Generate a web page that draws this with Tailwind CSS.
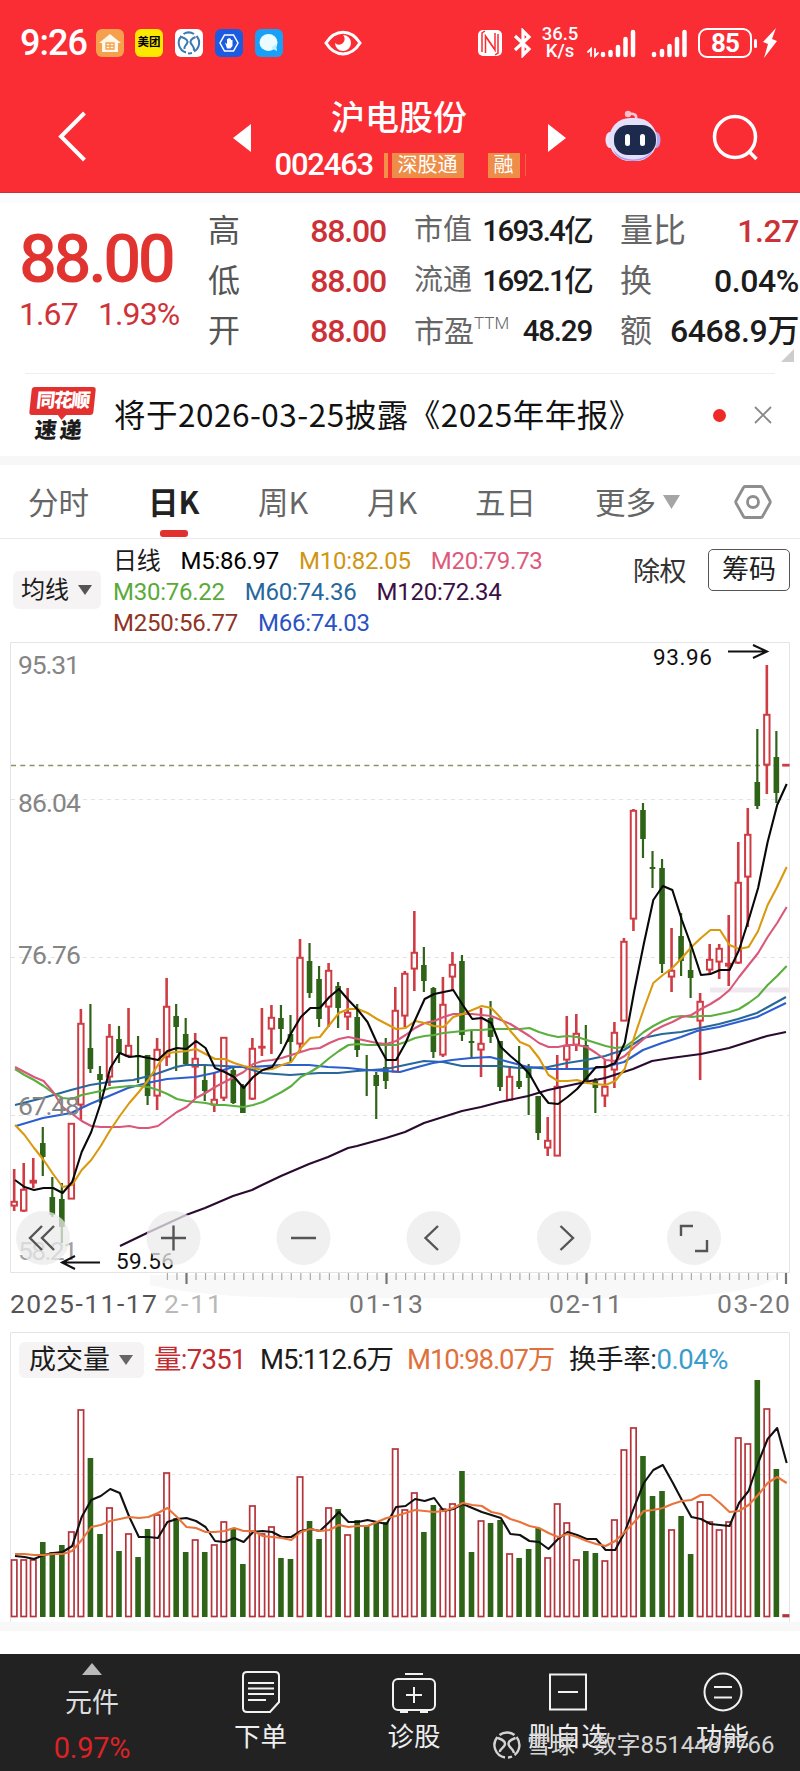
<!DOCTYPE html>
<html lang="zh-CN">
<head>
  <meta charset="UTF-8" />
  <meta name="viewport" content="width=device-width, initial-scale=1" />
  <title>沪电股份 002463</title>
  <script src="https://cdn.jsdelivr.net/npm/@tailwindcss/browser@4"></script>
</head>
<body class="bg-white text-[#1c1c1c] font-[Roboto,'Noto_Sans_CJK_SC',sans-serif]">
  <main class="w-[800px] h-[1771px] flex flex-col overflow-hidden">

    <!-- Header -->
    <header class="h-[193px] shrink-0 bg-[#fa2c34] border-b border-[#c8323a] text-white flex flex-col">
      <!-- Status bar -->
      <div class="h-[86px] flex items-center pl-[20px]">
        <span class="text-[36px] font-medium tracking-[-1px] w-[76px]">9:26</span>
        <svg class="w-[28px] h-[28px]" viewBox="0 0 28 28">
          <rect width="28" height="28" rx="6" fill="#f5a04c" />
          <path d="M3 14 14 5l11 9h-3v9H6v-9z" fill="#fff8e8" />
          <path d="M10 14h8v6h-8zM14 14v6M10 17h8" fill="none" stroke="#f5a04c" stroke-width="1.3" />
        </svg>
        <span class="ml-[11px] w-[28px] h-[28px] rounded-md bg-[#fde800] text-black text-[11.5px] font-bold flex items-center justify-center whitespace-nowrap">美团</span>
        <svg class="ml-[12px] w-[28px] h-[28px]" viewBox="0 0 28 28" fill="none" stroke="#3c78b4" stroke-width="2">
          <rect width="28" height="28" rx="6" fill="#fff" stroke="none" />
          <path d="M11 23.500A10 10 0 0 1 6.500 7M8.500 5a10 10 0 0 1 10.500 0M21.500 7A10 10 0 0 1 19 22.500M17 24a10 10 0 0 1-4 .3M6.500 8c5 1.500 7 4 5.500 6.500S9 17 9.500 20M20.500 8c-4 1.500-6 4-4.500 6.500s3.500 3 3 7" />
        </svg>
        <svg class="ml-[12px] w-[28px] h-[28px]" viewBox="0 0 28 28">
          <rect width="28" height="28" rx="6" fill="#1a5be0" />
          <path d="M9.500 6h9l4.500 8-4.500 8h-9L5 14z" fill="none" stroke="#fff" stroke-width="1.500" />
          <path d="M10 13.500l2 1.500v-5h1.300V9h1.400v.7H16V11h1.500v6l-2 2.500h-3.500z" fill="#fff" />
        </svg>
        <svg class="ml-[12px] w-[28px] h-[28px]" viewBox="0 0 28 28">
          <rect width="28" height="28" rx="6" fill="#18a0f8" />
          <ellipse cx="13.500" cy="13.500" rx="9" ry="8.500" fill="#eafcff" />
          <path d="M16 19l6 3-1-7z" fill="#bff0ff" />
        </svg>
        <svg class="ml-[41px] w-[38px] h-[26px]" viewBox="0 0 38 26">
          <path d="M2 13c9-14.500 25-14.500 34 0-9 14.500-25 14.500-34 0z" fill="none" stroke="#fff" stroke-width="3" />
          <path d="M19 5a8 8 0 1 1-8 8 5.500 5.500 0 0 0 8-8z" fill="#fff" />
        </svg>
        <svg class="ml-[115px] w-[26px] h-[28px]" viewBox="0 0 26 28">
          <rect x="1" y="1" width="24" height="26" rx="5" fill="#fff" />
          <path d="M8.500 24V7l9 13M9 8l9 13V4M5 23V4l3-2M21 5v19l-3 2" fill="none" stroke="#fa2c34" stroke-width="1.500" />
        </svg>
        <svg class="ml-[10px] w-[20px] h-[30px]" viewBox="0 0 20 30" fill="none" stroke="#fff" stroke-width="3.200">
          <path d="M2 8l14 13-6 6V3l6 6L2 22" />
        </svg>
        <div class="ml-[8px] w-[38px] text-[18.500px] leading-[17px] font-medium text-center flex flex-col"><span>36.5</span><span>K/s</span></div>
        <svg class="ml-[7px] w-[50px] h-[30px]" viewBox="0 0 50 30" fill="none" stroke="#fff" stroke-width="4.500" stroke-linecap="round">
          <path d="M17 26v1M24.500 24v3M32 19v8M39.500 11v16M47 4v23" />
          <path d="M5 28v-7l-3 3M9 21v7l3-3" stroke-width="1.800" />
        </svg>
        <svg class="ml-[15px] w-[37px] h-[30px]" viewBox="0 0 37 30" fill="none" stroke="#fff" stroke-width="4.500" stroke-linecap="round">
          <path d="M3 26v1M11 23v4M18.500 18v9M26 11v16M33.500 4v23" />
        </svg>
        <div class="ml-[10px] w-[54px] h-[30px] rounded-[9px] border-2 border-white text-[26px] font-bold tracking-[-1px] flex items-center justify-center">85</div>
        <div class="ml-[2px] w-[3px] h-[9px] rounded bg-white"></div>
        <svg class="ml-[6px] w-[15px] h-[30px]" viewBox="0 0 15 30"><path d="M13 0 0 14l5 2-4 14 13-17-5-2z" fill="#fff" /></svg>
      </div>

      <!-- Title bar -->
      <div class="h-[106px] flex">
        <svg class="ml-[57px] mt-[24px] w-[30px] h-[52px]" viewBox="0 0 30 52" fill="none" stroke="#fff" stroke-width="4"><path d="M27.500 3 4 26.500 27.500 50" /></svg>
        <svg class="ml-[146px] mt-[38px] w-[18px] h-[28px]" viewBox="0 0 18 28"><path d="M18 0v28L0 14z" fill="#fff" /></svg>
        <div class="w-[296px] flex flex-col items-center">
          <h1 class="mt-[10px] h-[44px] leading-[44px] text-[34px] font-medium">沪电股份</h1>
          <div class="h-[50px] ml-[2px] flex items-center">
            <span class="w-[109px] text-[31px] font-medium tracking-[-1.200px]">002463</span>
            <span class="w-[4px] h-[25px] bg-[#f49048] mr-[4px]"></span>
            <span class="w-[72px] h-[25px] bg-[#ee8d48] text-[20px] leading-[24px] text-center">深股通</span>
            <span class="ml-[24px] w-[32px] h-[25px] bg-[#ee8d48] text-[20px] leading-[24px] text-center">融</span>
            <span class="ml-[5px] w-px h-[22px] bg-[#f06840]"></span>
          </div>
        </div>
        <svg class="ml-[1px] mt-[38px] w-[18px] h-[28px]" viewBox="0 0 18 28"><path d="M0 0v28l18-14z" fill="#fff" /></svg>
        <svg class="ml-[38px] mt-[23px] w-[58px] h-[54px]" viewBox="0 0 58 54">
          <path d="M32 10c1-4-2-6-7-5" fill="none" stroke="#ffc8dc" stroke-width="2.500" />
          <circle cx="24" cy="5" r="3.200" fill="#ffc0cc" />
          <ellipse cx="6" cy="31" rx="4.500" ry="8" fill="#e8e6fa" />
          <ellipse cx="52" cy="31" rx="4.500" ry="8" fill="#b4a8f0" />
          <rect x="5" y="9" width="48" height="43" rx="21" fill="#e4e0fb" />
          <path d="M9 40c8 14 32 14 40 0-4 16-36 16-40 0z" fill="#a99cf4" />
          <rect x="10" y="16" width="42" height="30" rx="14" fill="#1d2a4e" />
          <rect x="21" y="25" width="5" height="12" rx="2.500" fill="#fff" />
          <rect x="36" y="25" width="5" height="12" rx="2.500" fill="#fff" />
        </svg>
        <svg class="ml-[50px] mt-[28px] w-[48px] h-[48px]" viewBox="0 0 48 48" fill="none" stroke="#fff" stroke-width="3.500"><circle cx="23" cy="23" r="20.500" /><path d="M36.500 37l8 8" /></svg>
      </div>
    </header>

    <!-- Quote -->
    <section class="h-[180px] shrink-0 flex relative border-t-[10px] border-[#fcfcfe]">
      <div class="w-[208px] pl-[19px] text-[#e1332f]">
        <div class="mt-[22px] h-[68px] leading-[68px] text-[67px] font-medium tracking-[-3.500px]">88.00</div>
        <div class="mt-[2px] flex text-[32px] tracking-[-0.900px] leading-[38px] text-[#cf3238]"><span class="w-[79px]">1.67</span><span>1.93%</span></div>
      </div>
      <div class="w-[178px] pt-[3px] grid grid-rows-[50px_50px_50px] text-[32px] text-[#cb3238] font-medium tracking-[-1.200px]">
        <div class="flex items-center justify-between"><span class="text-[32px] text-[#555] font-normal">高</span><span>88.00</span></div>
        <div class="flex items-center justify-between"><span class="text-[32px] text-[#555] font-normal">低</span><span>88.00</span></div>
        <div class="flex items-center justify-between"><span class="text-[32px] text-[#555] font-normal">开</span><span>88.00</span></div>
      </div>
      <div class="ml-[28px] w-[178px] pt-[3px] grid grid-rows-[50px_50px_50px] text-[29.500px] font-medium tracking-[-1.700px]">
        <div class="flex items-center justify-between"><span class="text-[29px] text-[#666] font-normal tracking-normal">市值</span><span>1693.4亿</span></div>
        <div class="flex items-center justify-between"><span class="text-[29px] text-[#666] font-normal tracking-normal">流通</span><span>1692.1亿</span></div>
        <div class="flex items-center justify-between"><span class="text-[30px] text-[#666] font-normal tracking-normal flex">市盈<span class="text-[17px] -mt-[5px] leading-[38px] font-light">TTM</span></span><span class="tracking-[-1.200px]">48.29</span></div>
      </div>
      <div class="ml-[28px] w-[179px] pt-[3px] grid grid-rows-[50px_50px_50px] text-[32px] font-medium tracking-[-0.400px]">
        <div class="flex items-center justify-between"><span class="text-[33px] text-[#666] font-normal tracking-normal">量比</span><span class="text-[#cb3238]">1.27</span></div>
        <div class="flex items-center justify-between"><span class="text-[32px] text-[#666] font-normal">换</span><span>0.04%</span></div>
        <div class="flex items-center justify-between"><span class="text-[32px] text-[#666] font-normal">额</span><span>6468.9万</span></div>
      </div>
      <svg class="absolute left-[781px] top-[146px] w-[13px] h-[13px]" viewBox="0 0 13 13"><path d="M13 0v13H0z" fill="#cdcdcd" /></svg>
    </section>

    <!-- News line -->
    <section class="h-[83px] shrink-0 mx-[25px] border-t border-[#eee] flex items-center">
      <div class="ml-[3px] w-[66px] flex flex-col items-center text-[19px] font-black -skew-x-6">
        <div class="relative w-[64px] h-[28px] rounded-[3px] bg-[#e2312f] text-white leading-[27px] text-center tracking-[-1.500px]">同花顺
          <svg class="absolute left-[28px] top-[27px] w-[10px] h-[6px]" viewBox="0 0 10 6"><path d="M0 0h10L5 6z" fill="#e2312f" /></svg>
        </div>
        <div class="mt-[3px] h-[26px] leading-[26px] text-[22px] tracking-[3px] mr-[-1px]">速递</div>
      </div>
      <p class="ml-[20px] -mt-[2px] w-[599px] text-[31.500px] tracking-[0.500px] whitespace-nowrap font-['Noto_Sans_CJK_SC',sans-serif] text-[#111]">将于2026-03-25披露《2025年年报》</p>
      <span class="w-[13px] h-[13px] rounded-full bg-[#ee2a28]"></span>
      <svg class="ml-[28px] w-[18px] h-[18px]" viewBox="0 0 18 18" stroke="#888" stroke-width="1.800"><path d="M1 1l16 16M17 1 1 17" /></svg>
    </section>

    <!-- Period tabs -->
    <nav class="h-[83px] shrink-0 border-t-[9px] border-t-[#f7f7f8] border-b border-b-[#ececee] flex items-center text-[30.500px] text-[#666] font-['Noto_Sans_CJK_SC',sans-serif]">
      <a class="ml-[28px] w-[120px]">分时</a>
      <a class="relative w-[110px] font-bold text-[#222]">日K<span class="absolute left-[12px] -bottom-[13px] w-[28px] h-[7px] rounded-[3px] bg-[#e1302e]"></span></a>
      <a class="w-[109px]">周K</a>
      <a class="w-[108px]">月K</a>
      <a class="w-[120px]">五日</a>
      <a class="w-[139px] flex items-center">更多<svg class="ml-[7px] w-[17px] h-[14px]" viewBox="0 0 17 14"><path d="M0 0h17L8.500 14z" fill="#a5a5a5" /></svg></a>
      <svg class="w-[38px] h-[36px]" viewBox="0 0 38 36" fill="none" stroke="#8e8e8e" stroke-width="2.800"><path d="M11 2.500h16q1 0 1.500 1L36 17q.5 1 0 2l-7.500 13.500q-.5 1-1.500 1H11q-1 0-1.500-1L2 19q-.5-1 0-2L9.500 3.500q.5-1 1.500-1z" /><circle cx="19" cy="18" r="5.500" /></svg>
    </nav>

    <!-- Moving averages -->
    <section class="h-[103px] shrink-0 flex pl-[13px]">
      <div class="mt-[32px] w-[88px] h-[38px] rounded-md bg-[#f6f3f5] pl-[8px] flex items-center text-[24px]">均线<svg class="ml-[9px] w-[14px] h-[10px]" viewBox="0 0 14 10"><path d="M0 0h14L7 10z" fill="#555" /></svg></div>
      <div class="ml-[12px] mt-[7px] w-[520px] text-[24px] leading-[31px] tracking-[-0.250px]">
        <div class="flex gap-[20px]"><span>日线</span><span class="text-black">M5:86.97</span><span class="text-[#cf9612]">M10:82.05</span><span class="text-[#dd5a7c]">M20:79.73</span></div>
        <div class="flex gap-[20px]"><span class="text-[#5aaa3a]">M30:76.22</span><span class="text-[#27679c]">M60:74.36</span><span class="text-[#3b0f45]">M120:72.34</span></div>
        <div class="flex gap-[20px]"><span class="text-[#8e3526]">M250:56.77</span><span class="text-[#2b52c2]">M66:74.03</span></div>
      </div>
      <span class="mt-[13px] w-[75px] text-[27px] tracking-[-0.500px] text-[#333]">除权</span>
      <span class="mt-[10px] w-[82px] h-[42px] leading-[40px] text-center rounded-[5px] border-[1.500px] border-[#555] text-[27px]">筹码</span>
    </section>

    <!-- Daily K chart with its time axis -->
    <svg id="price" class="shrink-0 w-[800px] h-[690px]" viewBox="0 642 800 690">
      <path d="M150 1275H780Q760 1296 640 1298H300Q200 1297 150 1285z" fill="#f9f8f9" />
      <path d="M10.500 642.500h779v630h-779z" fill="none" stroke="#e4e4e6" />
      <path d="M11 799.500H789M11 957.500H789M11 1115.500H789" stroke="#e3e3e3" stroke-dasharray="4 4" />
      <path d="M11 765.500H780" stroke="#8f9064" stroke-width="1.400" stroke-dasharray="5 4.300" />
      <path d="M710 990H790" stroke="#efe8ee" stroke-width="5" />
      <g id="candles"></g>
      <g id="averages" fill="none" stroke-width="2.100" stroke-linejoin="round">
        <polyline stroke="#27679c" points="15,1105 43,1098 71,1090 90,1085 109,1082 133,1080 153,1075 176,1067 186,1065 205,1065 224,1066 243,1067 262,1073 290,1075 319,1073 338,1073 357,1071 386,1069 405,1065 424,1061 443,1062 462,1066 481,1066 500,1066 519,1068 548,1067 567,1063 586,1060 605,1056 614,1053 624,1050 643,1038 662,1034 681,1032 700,1028 719,1024 738,1019 757,1013 786,997" />
        <polyline stroke="#2b5fd0" points="16,1126 43,1118 71,1113 90,1104 109,1096 128,1088 147,1083 167,1079 195,1077 214,1073 233,1067 252,1067 281,1065 309,1065 328,1067 348,1068 367,1070 386,1071 400,1072 414,1068 433,1063 452,1060 471,1058 490,1057 509,1062 528,1067 548,1069 567,1069 586,1069 605,1067 624,1062 643,1050 662,1043 681,1037 697,1031 719,1027 738,1022 757,1017 786,1003" />
        <polyline stroke="#2a0a30" points="120,1246 147,1233 186,1215 205,1208 233,1196 252,1190 260,1186 281,1176 309,1164 328,1157 348,1148 357,1146 386,1138 405,1132 424,1123 443,1117 462,1111 481,1107 500,1102 528,1096 548,1090 576,1084 605,1078 633,1069 652,1061 671,1058 701,1054 729,1048 767,1036 786,1032" />
      </g>
      <g fill="#858585" font-size="26.500">
        <text x="18" y="674" textLength="62">95.31</text>
        <text x="18" y="812" textLength="63">86.04</text>
        <text x="18" y="964" textLength="63">76.76</text>
        <text x="18" y="1115" textLength="62">67.48</text>
        <text x="18" y="1260" textLength="60" fill="#a0a0a0">58.21</text>
      </g>
      <g fill="#111" font-size="22.500">
        <text x="653" y="665" textLength="59">93.96</text>
        <text x="116" y="1269" textLength="58">59.56</text>
      </g>
      <path d="M728 651.500h38M753 645l14 6.500-14 6.500M100 1262.500H63M75 1256l-13 6.500 13 6.500" fill="none" stroke="#111" stroke-width="2" />

      <!-- Chart buttons -->
      <g fill="#ebebeb" fill-opacity=".75">
        <circle cx="43" cy="1238" r="27" /><circle cx="173.500" cy="1238" r="27" /><circle cx="303.500" cy="1238" r="27" /><circle cx="433.500" cy="1238" r="27" /><circle cx="564" cy="1238" r="27" /><circle cx="694" cy="1238" r="27" />
      </g>
      <path d="M42 1226l-12 12 12 12M54 1226l-12 12 12 12M161 1238h25M173.500 1225.500v25M291 1238h25M438 1226l-12.500 12 12.500 12M560.500 1226l12.500 12-12.500 12M681 1236v-10h12M707 1240v11h-12" fill="none" stroke="#555" stroke-width="2.400" />

      <path id="ticks" stroke="#aaa" stroke-width="1.200" />
      <path d="M186.500 1273v11M386.500 1273v11M586.500 1273v11M786 1273v11" stroke="#777" stroke-width="2.200" />
      <g fill="#555" font-size="26.500">
        <text x="10" y="1313" textLength="147">2025-11-17</text>
        <text x="164" y="1313" textLength="58" fill="#b8b8b8">2-11</text>
        <text x="349" y="1313" textLength="74" fill="#777">01-13</text>
        <text x="549" y="1313" textLength="73" fill="#777">02-11</text>
        <text x="717" y="1313" textLength="73" fill="#777">03-20</text>
      </g>
    </svg>

    <!-- Volume -->
    <section class="h-[290px] shrink-0 relative">
      <svg class="absolute left-0 top-0 w-[800px] h-[290px]" viewBox="0 1332 800 290">
        <path d="M10.500 1622V1332.500h779V1622" fill="none" stroke="#e4e4e6" />
        <path d="M11 1474.500H789" stroke="#e3e3e3" stroke-dasharray="3 4" />
        <g id="volumes"></g>
        <g id="volume-averages" fill="none" stroke-width="2.100" stroke-linejoin="round"></g>
      </svg>
      <div class="relative h-[56px] pl-[19px] flex items-center text-[27.500px] tracking-[-1.100px] whitespace-nowrap">
        <div class="w-[125px] h-[36px] rounded-md bg-[#f5f3f4] pl-[10px] flex items-center text-[27px] tracking-normal">成交量<svg class="ml-[9px] w-[14px] h-[10px]" viewBox="0 0 14 10"><path d="M0 0h14L7 10z" fill="#666" /></svg></div>
        <span class="ml-[10px] w-[106px] tracking-[-0.700px] text-[#c02c30]">量:7351</span>
        <span class="w-[147px]">M5:112.6万</span>
        <span class="w-[162px] text-[#e0703c]">M10:98.07万</span>
        <span class="tracking-[-0.400px]">换手率:</span><span class="tracking-[-0.500px] text-[#3a9ccb]">0.04%</span>
      </div>
    </section>

    <div class="h-[9px] shrink-0 bg-[#f9f8f9]"></div>
    <div class="h-[23px] shrink-0"></div>

    <!-- Bottom bar -->
    <footer class="relative h-[117px] shrink-0 bg-[#222] text-[#eee] text-[26.500px] flex">
      <div class="w-[184px] flex flex-col items-center">
        <svg class="mt-[9px] w-[20px] h-[12px]" viewBox="0 0 20 12"><path d="M10 0l10 12H0z" fill="#b9b9b9" /></svg>
        <span class="mt-[9px] h-[38px] leading-[38px] text-[27px] text-[#ddd]">元件</span>
        <span class="mt-[7px] h-[38px] leading-[38px] text-[29px] tracking-[-0.300px] text-[#dc2226]">0.97%</span>
      </div>
      <div class="w-[153px] flex flex-col items-center">
        <svg class="mt-[16px] w-[40px] h-[44px]" viewBox="0 0 40 44" fill="none" stroke="#f2f2f2" stroke-width="2"><path d="M6 2h28q4 0 4 4v26l-9 10H6q-4 0-4-4V6q0-4 4-4zM7 13h26M7 18.500h26M7 24h26M7 30h18" /></svg>
        <span class="mt-[3px] h-[40px] leading-[40px]">下单</span>
      </div>
      <div class="w-[154px] flex flex-col items-center">
        <svg class="mt-[16px] w-[46px] h-[44px]" viewBox="0 0 46 44" fill="none" stroke="#f2f2f2" stroke-width="2"><rect x="2" y="9" width="42" height="31" rx="5" /><path d="M14 4h18M23 17v16M15 25h16M9 42h8M29 42h8" /></svg>
        <span class="mt-[3px] h-[40px] leading-[40px]">诊股</span>
      </div>
      <div class="w-[154px] flex flex-col items-center">
        <svg class="mt-[16px] w-[40px] h-[44px]" viewBox="0 0 40 44" fill="none" stroke="#f2f2f2" stroke-width="2"><path d="M2 4.500h36v35H2zM10 22h20" /></svg>
        <span class="mt-[3px] h-[40px] leading-[40px]">删自选</span>
      </div>
      <div class="w-[155px] flex flex-col items-center">
        <svg class="mt-[16px] w-[40px] h-[44px]" viewBox="0 0 40 44" fill="none" stroke="#f2f2f2" stroke-width="2"><circle cx="20" cy="22" r="18.500" /><path d="M11 17h18M11 27.500h18" /></svg>
        <span class="mt-[3px] h-[40px] leading-[40px]">功能</span>
      </div>
      <!-- Watermark -->
      <div class="absolute left-[493px] top-[73px] h-[36px] flex items-center text-[24px] tracking-[-0.100px] text-[#d4d4d4] whitespace-nowrap">
        <svg class="w-[28px] h-[28px]" viewBox="0 0 28 28" fill="none" stroke="#d4d4d4" stroke-width="2.400"><path d="M12 26.500A12.500 12.500 0 0 1 4.500 6M6.500 4a12.500 12.500 0 0 1 15 0M23.500 6a12.500 12.500 0 0 1-2 18M19 25.500a12.500 12.500 0 0 1-4 1M5 7c6 2 8 4.500 6.500 7.500S6.500 18 7 21M22.500 7c-6 2-8 4.500-6.500 7.500s4.500 3.500 5 7.500" /></svg>
        <span class="ml-[6px]">雪球 · 数字8514487766</span>
      </div>
    </footer>
  </main>

  <script>
    const RED = '#cf3c44', GREEN = '#2f6418';
    const x = i => 14.2 + i * 9.527;
    const $ = id => document.getElementById(id);

    // r = up, g = down; then high, body top, body bottom, low, volume top
    const days = `r 1169 1201 1206 1211 1560|r 1163 1189 1211 1212 1560|r 1158 1180 1183 1188 1560|g 1127 1143 1157 1176 1543|g 1177 1197 1215 1217 1553
g 1183 1199 1227 1243 1546|r 1123 1123 1199 1199 1532|r 1009 1023 1105 1120 1410|g 1004 1048 1069 1073 1459|g 1066 1074 1080 1103 1535
r 1024 1036 1077 1086 1508|g 1026 1039 1053 1063 1552|r 1008 1045 1056 1056 1534|g 1036 1055 1057 1083 1558|g 1055 1055 1096 1105 1530
r 1038 1049 1096 1110 1515|r 978 1006 1057 1066 1473|g 1004 1016 1027 1071 1519|g 1018 1034 1064 1065 1553|r 1033 1058 1067 1098 1540
g 1064 1080 1091 1101 1553|r 1072 1099 1105 1112 1545|r 1037 1037 1098 1101 1522|g 1066 1070 1103 1104 1529|g 1084 1086 1113 1113 1565
r 1038 1048 1099 1100 1506|r 1008 1046 1048 1056 1534|r 1005 1017 1029 1054 1527|g 1005 1018 1029 1044 1559|g 1015 1034 1042 1062 1560
r 939 957 1044 1051 1477|g 943 961 993 998 1522|g 966 979 1019 1027 1540|r 963 970 1007 1027 1508|g 982 986 1008 1028 1510
r 988 1012 1017 1030 1535|g 1004 1017 1050 1057 1521|g 1055 1069 1071 1096 1526|g 1072 1075 1086 1119 1523|g 1038 1067 1081 1089 1523
r 987 1010 1072 1072 1449|r 971 973 1016 1027 1510|r 911 952 969 991 1493|g 947 965 981 992 1533|g 987 988 1052 1058 1506
r 977 1004 1055 1057 1509|r 952 964 977 990 1504|g 955 961 1035 1041 1472|g 1030 1041 1043 1058 1553|r 1008 1043 1050 1077 1521
g 1001 1018 1037 1043 1524|g 1041 1041 1087 1091 1521|r 1067 1076 1100 1101 1554|g 1046 1081 1087 1089 1559|g 1064 1067 1078 1115 1550
g 1096 1096 1133 1140 1529|r 1117 1140 1148 1156 1558|r 1055 1086 1156 1156 1504|r 1016 1045 1060 1070 1523|r 1014 1033 1045 1051 1560
g 1025 1045 1081 1082 1552|g 1078 1081 1088 1113 1554|r 1059 1086 1096 1107 1561|r 1022 1032 1070 1088 1520|r 938 941 1021 1021 1450
r 809 810 919 931 1428|g 803 810 839 858 1457|g 851 867 869 888 1497|g 859 868 964 973 1492|r 928 970 977 992 1530
g 913 936 961 976 1517|g 944 970 978 998 1555|r 993 1001 1021 1080 1502|r 944 959 970 974 1522|r 944 948 962 979 1530
r 915 963 966 986 1522|r 842 882 963 964 1438|r 808 834 877 927 1444|g 729 782 806 809 1381|r 665 714 765 794 1409
g 731 757 793 803 1470|r 765 764 766 765 1615`.split(/[|\n]/).map(d => d.split(' '));

    let candles = '', volumes = '';
    days.forEach(([dir, ...v], i) => {
      const [hi, top, bot, lo, vol] = v.map(Number), c = x(i);
      if (dir === 'g') {
        candles += `<path d="M${c} ${hi}V${lo}" stroke="${GREEN}" stroke-width="2.2"/><rect x="${c - 2.8}" y="${top}" width="5.6" height="${bot - top}" fill="${GREEN}"/>`;
        volumes += `<rect x="${c - 2.8}" y="${vol - 1}" width="5.6" height="${1618 - vol}" fill="${GREEN}"/>`;
      } else {
        candles += `<path d="M${c} ${hi}V${top}M${c} ${bot}V${lo}" stroke="${RED}" stroke-width="2.6"/><rect x="${c - 2.7}" y="${top + .8}" width="5.4" height="${Math.max(bot - top - 1.2, .5)}" fill="none" stroke="${RED}" stroke-width="2"/>`;
        volumes += `<rect x="${c - 2.7}" y="${vol}" width="5.4" height="${1616.5 - vol}" fill="none" stroke="#b5343c" stroke-width="1.7"/>`;
      }
    });
    $('candles').innerHTML = candles;
    $('volumes').innerHTML = volumes;

    const line = (color, ys) => `<polyline stroke="${color}" points="${ys.map((y, i) => x(i) + 0.8 + ',' + y).join(' ')}"/>`;

    $('averages').innerHTML +=
      line('#5aaf3f', [1069,1075,1080,1086,1093,1098,1099,1095,1093,1091,1088,1087,1086,1086,1087,1090,1094,1099,1101,1102,1103,1105,1105,1106,1107,1105,1102,1097,1092,1086,1077,1072,1066,1058,1051,1045,1044,1045,1045,1045,1045,1042,1038,1036,1035,1033,1032,1031,1030,1030,1029,1029,1029,1029,1028,1032,1035,1037,1036,1037,1040,1043,1046,1048,1047,1040,1032,1026,1021,1017,1016,1017,1016,1016,1014,1012,1009,1003,996,985,976,966]) +
      line('#d9587a', [1067,1072,1077,1081,1092,1107,1114,1121,1126,1127,1127,1127,1126,1128,1128,1126,1119,1112,1107,1098,1093,1087,1082,1077,1072,1064,1061,1060,1058,1055,1052,1049,1048,1043,1039,1037,1039,1041,1043,1044,1041,1035,1028,1023,1021,1017,1014,1014,1014,1015,1016,1020,1024,1030,1036,1043,1047,1047,1045,1045,1047,1053,1060,1061,1056,1047,1039,1031,1026,1022,1017,1015,1009,1004,998,990,977,965,953,937,923,907]) +
      line('#d99a10', [1125,1135,1148,1160,1174,1187,1185,1170,1160,1146,1130,1116,1103,1092,1080,1065,1053,1052,1051,1049,1054,1059,1059,1063,1066,1068,1070,1069,1065,1062,1048,1038,1037,1025,1013,1009,1009,1013,1019,1024,1029,1028,1021,1023,1026,1027,1017,1014,1010,1006,1008,1018,1031,1042,1046,1058,1075,1081,1081,1080,1083,1084,1085,1081,1069,1037,1009,983,975,968,958,947,938,930,930,945,949,947,931,905,887,867]) +
      line('#080808', [1180,1187,1190,1188,1188,1193,1182,1152,1132,1103,1068,1053,1057,1056,1058,1060,1051,1048,1049,1041,1048,1068,1072,1077,1088,1077,1070,1067,1052,1033,1017,1008,1008,997,989,1000,1010,1022,1043,1060,1060,1043,1020,999,994,992,990,1005,1019,1018,1023,1047,1056,1064,1074,1091,1103,1104,1097,1089,1078,1067,1067,1063,1043,991,944,900,886,890,920,946,975,974,970,970,950,920,888,842,805,784]);

    $('volume-averages').innerHTML =
      line('#111', [1556,1557,1559,1555,1553,1552,1546,1517,1500,1496,1489,1493,1517,1537,1537,1538,1522,1519,1518,1521,1527,1541,1542,1538,1542,1532,1531,1532,1537,1537,1531,1529,1531,1522,1512,1522,1522,1520,1522,1524,1507,1506,1499,1501,1498,1511,1509,1504,1508,1512,1515,1518,1534,1535,1541,1542,1549,1539,1532,1535,1539,1539,1550,1550,1532,1507,1483,1470,1465,1482,1500,1517,1519,1524,1525,1526,1503,1491,1463,1439,1428,1463]) +
      line('#e8743c', [1554,1554,1555,1555,1554,1554,1551,1540,1527,1525,1521,1519,1517,1518,1517,1513,1508,1517,1527,1528,1532,1532,1531,1528,1531,1531,1536,1537,1538,1540,1532,1529,1531,1530,1525,1527,1526,1526,1522,1518,1516,1513,1510,1511,1512,1511,1508,1503,1505,1506,1512,1514,1519,1522,1526,1528,1533,1537,1534,1537,1541,1544,1546,1541,1532,1522,1511,1510,1508,1504,1501,1500,1495,1495,1503,1512,1511,1505,1495,1483,1477,1483]);

    let ticks = '';
    for (let i = 16; i < 81; i++) ticks += `M${x(i) + 0.8} 1273v7`;
    $('ticks').setAttribute('d', ticks);
  </script>
</body>
</html>
